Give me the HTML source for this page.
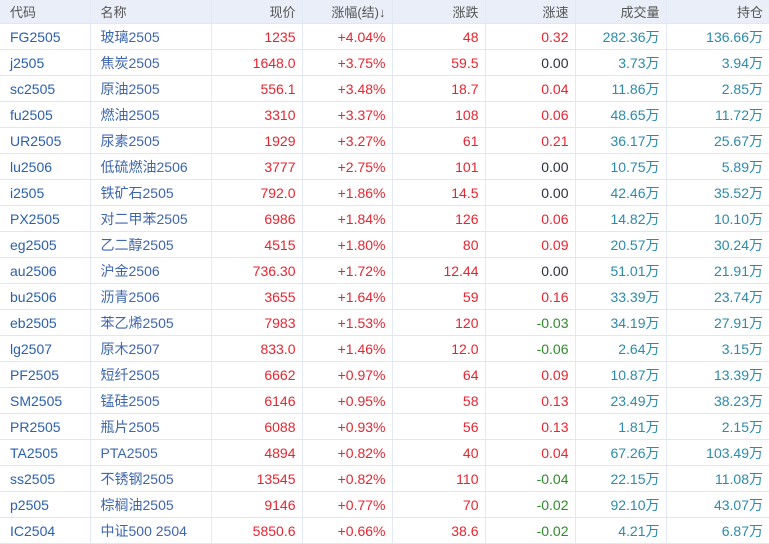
<!DOCTYPE html><html><head><meta charset="utf-8"><style>
body{margin:0;width:769px;height:544px;overflow:hidden;background:#fff;font-family:"Liberation Sans","Noto Sans CJK SC",sans-serif;font-size:14px}
table{border-collapse:collapse;table-layout:fixed;width:769px}
td,th{height:25px;border-bottom:1px solid #dfe7f5;border-right:1px solid #e3eaf6;padding:0 6px 0 0;white-space:nowrap;text-align:right;font-weight:normal}
th{height:23px;background:#e9eef8;color:#555;font-size:13px}
tr td:nth-child(1),tr th:nth-child(1){text-align:left;padding-left:10px}
tr td:nth-child(2),tr th:nth-child(2){text-align:left;padding-left:10px}
td:nth-child(1){color:#2a5fb0}td:nth-child(2){color:#3d66b0}
td:last-child,th:last-child{border-right:none}
.r{color:#e8242f}.k{color:#2a2f3a}.g{color:#2f8a2a}.b{color:#2a8bab}
</style></head><body><table>
<colgroup><col style="width:90px"><col style="width:121px"><col style="width:91px"><col style="width:90px"><col style="width:93px"><col style="width:90px"><col style="width:91px"><col style="width:103px"></colgroup>
<tr><th>代码</th><th>名称</th><th>现价</th><th>涨幅(结)↓</th><th>涨跌</th><th>涨速</th><th>成交量</th><th>持仓</th></tr>
<tr><td>FG2505</td><td>玻璃2505</td><td class=r>1235</td><td class=r>+4.04%</td><td class=r>48</td><td class=r>0.32</td><td class=b>282.36万</td><td class=b>136.66万</td></tr>
<tr><td>j2505</td><td>焦炭2505</td><td class=r>1648.0</td><td class=r>+3.75%</td><td class=r>59.5</td><td class=k>0.00</td><td class=b>3.73万</td><td class=b>3.94万</td></tr>
<tr><td>sc2505</td><td>原油2505</td><td class=r>556.1</td><td class=r>+3.48%</td><td class=r>18.7</td><td class=r>0.04</td><td class=b>11.86万</td><td class=b>2.85万</td></tr>
<tr><td>fu2505</td><td>燃油2505</td><td class=r>3310</td><td class=r>+3.37%</td><td class=r>108</td><td class=r>0.06</td><td class=b>48.65万</td><td class=b>11.72万</td></tr>
<tr><td>UR2505</td><td>尿素2505</td><td class=r>1929</td><td class=r>+3.27%</td><td class=r>61</td><td class=r>0.21</td><td class=b>36.17万</td><td class=b>25.67万</td></tr>
<tr><td>lu2506</td><td>低硫燃油2506</td><td class=r>3777</td><td class=r>+2.75%</td><td class=r>101</td><td class=k>0.00</td><td class=b>10.75万</td><td class=b>5.89万</td></tr>
<tr><td>i2505</td><td>铁矿石2505</td><td class=r>792.0</td><td class=r>+1.86%</td><td class=r>14.5</td><td class=k>0.00</td><td class=b>42.46万</td><td class=b>35.52万</td></tr>
<tr><td>PX2505</td><td>对二甲苯2505</td><td class=r>6986</td><td class=r>+1.84%</td><td class=r>126</td><td class=r>0.06</td><td class=b>14.82万</td><td class=b>10.10万</td></tr>
<tr><td>eg2505</td><td>乙二醇2505</td><td class=r>4515</td><td class=r>+1.80%</td><td class=r>80</td><td class=r>0.09</td><td class=b>20.57万</td><td class=b>30.24万</td></tr>
<tr><td>au2506</td><td>沪金2506</td><td class=r>736.30</td><td class=r>+1.72%</td><td class=r>12.44</td><td class=k>0.00</td><td class=b>51.01万</td><td class=b>21.91万</td></tr>
<tr><td>bu2506</td><td>沥青2506</td><td class=r>3655</td><td class=r>+1.64%</td><td class=r>59</td><td class=r>0.16</td><td class=b>33.39万</td><td class=b>23.74万</td></tr>
<tr><td>eb2505</td><td>苯乙烯2505</td><td class=r>7983</td><td class=r>+1.53%</td><td class=r>120</td><td class=g>-0.03</td><td class=b>34.19万</td><td class=b>27.91万</td></tr>
<tr><td>lg2507</td><td>原木2507</td><td class=r>833.0</td><td class=r>+1.46%</td><td class=r>12.0</td><td class=g>-0.06</td><td class=b>2.64万</td><td class=b>3.15万</td></tr>
<tr><td>PF2505</td><td>短纤2505</td><td class=r>6662</td><td class=r>+0.97%</td><td class=r>64</td><td class=r>0.09</td><td class=b>10.87万</td><td class=b>13.39万</td></tr>
<tr><td>SM2505</td><td>锰硅2505</td><td class=r>6146</td><td class=r>+0.95%</td><td class=r>58</td><td class=r>0.13</td><td class=b>23.49万</td><td class=b>38.23万</td></tr>
<tr><td>PR2505</td><td>瓶片2505</td><td class=r>6088</td><td class=r>+0.93%</td><td class=r>56</td><td class=r>0.13</td><td class=b>1.81万</td><td class=b>2.15万</td></tr>
<tr><td>TA2505</td><td>PTA2505</td><td class=r>4894</td><td class=r>+0.82%</td><td class=r>40</td><td class=r>0.04</td><td class=b>67.26万</td><td class=b>103.49万</td></tr>
<tr><td>ss2505</td><td>不锈钢2505</td><td class=r>13545</td><td class=r>+0.82%</td><td class=r>110</td><td class=g>-0.04</td><td class=b>22.15万</td><td class=b>11.08万</td></tr>
<tr><td>p2505</td><td>棕榈油2505</td><td class=r>9146</td><td class=r>+0.77%</td><td class=r>70</td><td class=g>-0.02</td><td class=b>92.10万</td><td class=b>43.07万</td></tr>
<tr><td>IC2504</td><td>中证500 2504</td><td class=r>5850.6</td><td class=r>+0.66%</td><td class=r>38.6</td><td class=g>-0.02</td><td class=b>4.21万</td><td class=b>6.87万</td></tr>
</table></body></html>
